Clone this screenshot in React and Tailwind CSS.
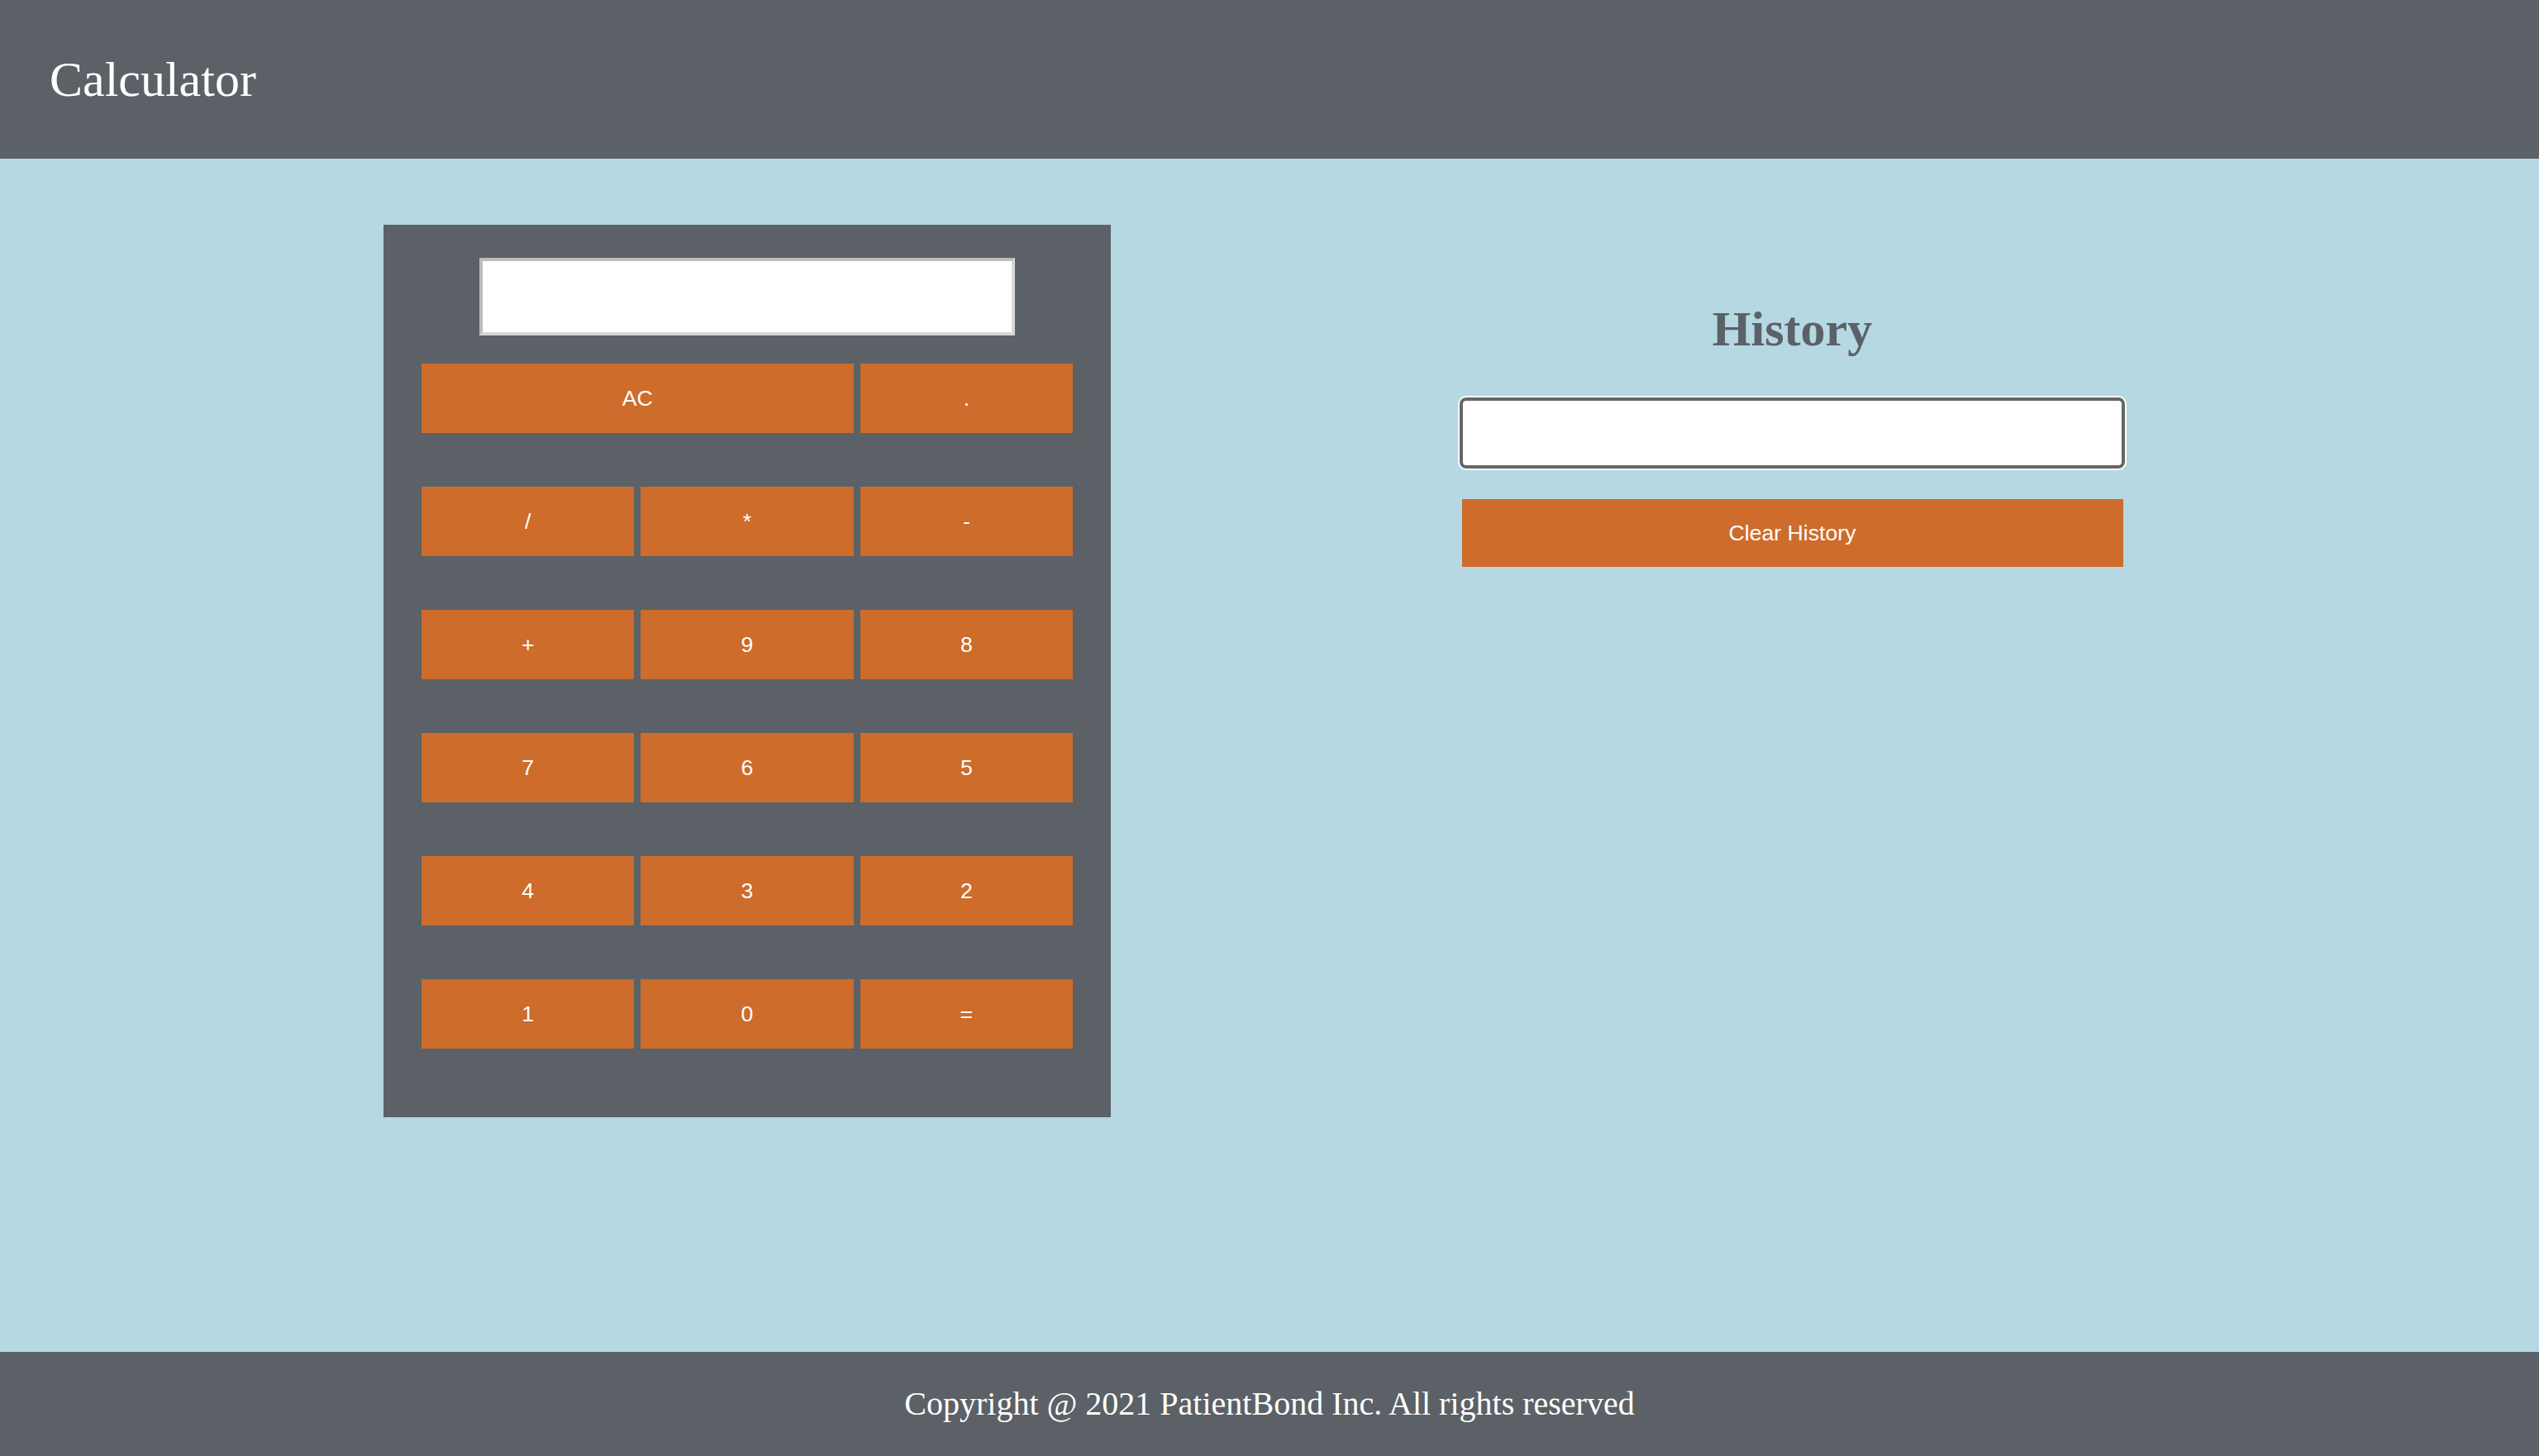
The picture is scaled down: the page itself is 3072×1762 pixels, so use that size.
const keys = [
  ['/', '*', '-'],
  ['+', '9', '8'],
  ['7', '6', '5'],
  ['4', '3', '2'],
  ['1', '0', '='],
]

function Key({ label, wide }) {
  return (
    <button
      className={
        'h-[84px] bg-[#cd6c2b] text-white text-[26.67px] font-["Liberation_Sans",Arial,sans-serif] ' +
        (wide ? 'col-span-2' : '')
      }
    >
      {label}
    </button>
  )
}

export default function App() {
  return (
    <div className="flex min-h-screen flex-col bg-[#b5d8e3] font-['Liberation_Serif','Times_New_Roman',serif]">
      <header className="flex h-[192px] items-center bg-[#5b6166] px-[60px]">
        <h1 className="text-[60px] text-white">Calculator</h1>
      </header>

      <main className="flex flex-1 items-start">
        <div className="ml-[464px] mt-[80px] flex h-[1080px] w-[880px] flex-col items-center bg-[#5b6166] pt-[40px]">
          <input
            className="h-[94px] w-[648px] border-4 border-t-[#bdbdbd] border-l-[#bdbdbd] border-b-[#d6d6d6] border-r-[#d6d6d6] bg-white"
            readOnly
          />
          <div className="mt-[34px] grid w-[788px] grid-cols-3 gap-x-[8px] gap-y-[65px]">
            <Key label="AC" wide />
            <Key label="." />
            {keys.flat().map((k, i) => (
              <Key key={i} label={k} />
            ))}
          </div>
        </div>

        <div className="ml-[422px] flex w-[805px] flex-col items-center">
          <h2 className="mt-[173px] text-[60px] leading-[66px] font-bold text-[#5b6166]">History</h2>
          <input
            className="mt-[50px] h-[86px] w-[805px] rounded-[8px] border-4 border-[#666666] bg-white shadow-[0_0_0_2px_#ffffff]"
            readOnly
          />
          <button className="mt-[37px] h-[82px] w-[800px] bg-[#cd6c2b] text-[26.67px] text-white font-['Liberation_Sans',Arial,sans-serif]">
            Clear History
          </button>
        </div>
      </main>

      <footer className="flex h-[126px] items-center justify-center bg-[#5b6166]">
        <p className="text-[40px] text-white">Copyright @ 2021 PatientBond Inc. All rights reserved</p>
      </footer>
    </div>
  )
}
